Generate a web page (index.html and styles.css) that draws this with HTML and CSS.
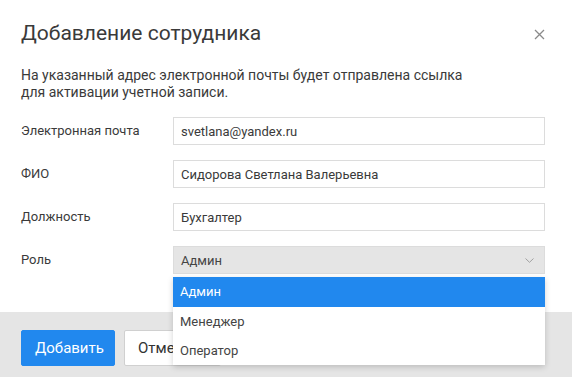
FILE: index.html
```html
<!DOCTYPE html>
<html lang="ru">
<head>
  <meta charset="UTF-8">
  <title>Добавление сотрудника</title>
  <link rel="stylesheet" href="styles.css">
</head>
<body>
  <div class="modal">
    <div class="modal-head">
      <h2>Добавление сотрудника</h2>
      <button class="close" aria-label="Закрыть">
        <svg width="11" height="11" viewBox="0 0 11 11"><path d="M1 1L10 10M10 1L1 10" stroke="#8a8a8a" stroke-width="1.3" fill="none"/></svg>
      </button>
    </div>

    <div class="modal-body">
      <p class="note">На указанный адрес электронной почты будет отправлена ссылка<br>для активации учетной записи.</p>

      <div class="form">
        <label>Электронная почта</label>
        <input type="text" value="svetlana@yandex.ru">

        <label>ФИО</label>
        <input type="text" value="Сидорова Светлана Валерьевна">

        <label>Должность</label>
        <input type="text" value="Бухгалтер">

        <label>Роль</label>
        <div class="select-wrap">
          <div class="select">
            <span>Админ</span>
            <svg width="9" height="5" viewBox="0 0 9 5"><path d="M0.5 0.5L4.5 4.3L8.5 0.5" stroke="#a0a0a0" stroke-width="1" fill="none"/></svg>
          </div>
          <ul class="options">
            <li class="active">Админ</li>
            <li>Менеджер</li>
            <li>Оператор</li>
          </ul>
        </div>
      </div>
    </div>

    <div class="modal-foot">
      <button class="btn btn-primary">Добавить</button>
      <button class="btn">Отменить</button>
    </div>
  </div>
</body>
</html>
```

FILE: styles.css
```css
body {
  margin: 0;
  background: #fff;
  font-family: Roboto, "Liberation Sans", Arial, sans-serif;
  color: #333;
}

.modal {
  width: 572px;
  height: 377px;
  display: flex;
  flex-direction: column;
  overflow: hidden;
}

.modal-head {
  display: flex;
  justify-content: space-between;
  align-items: center;
  padding: 19px 21px 0 21px;
  height: 28px;
}

.modal-head h2 {
  margin: 0;
  font-size: 21px;
  font-weight: 400;
  color: #3a3a3a;
}

.close {
  border: none;
  background: none;
  padding: 0;
  margin-top: 2px;
  margin-right: 6px;
  cursor: pointer;
  display: flex;
}

.modal-body {
  padding: 0 27px 0 21px;
  flex: 1;
}

.note {
  margin: 20px 0 16px 0;
  font-size: 14px;
  line-height: 17px;
  color: #3a3a3a;
}

.form {
  display: grid;
  grid-template-columns: 152px 1fr;
  row-gap: 15px;
  align-items: center;
}

.form label {
  font-size: 13px;
  color: #3a3a3a;
  margin-top: -2px;
}

.form input {
  height: 28px;
  box-sizing: border-box;
  border: 1px solid #dcdcdc;
  padding: 0 7px;
  font-family: inherit;
  font-size: 13px;
  color: #3a3a3a;
  outline: none;
}

.select-wrap {
  position: relative;
}

.select {
  height: 28px;
  box-sizing: border-box;
  border: 1px solid #dcdcdc;
  background: #e5e5e5;
  display: flex;
  align-items: center;
  justify-content: space-between;
  padding: 0 10px 0 7px;
  font-size: 13px;
  color: #444;
}

.options {
  position: absolute;
  top: 31px;
  left: 0;
  right: 0;
  margin: 0;
  padding: 0;
  list-style: none;
  background: #fff;
  box-shadow: 0 2px 6px rgba(0, 0, 0, 0.18);
  z-index: 2;
}

.options li {
  height: 29px;
  line-height: 29px;
  padding: 0 7px;
  font-size: 13px;
  color: #444;
}

.options li.active {
  height: 30px;
  line-height: 30px;
  background: #2188ee;
  color: #fff;
}

.modal-foot {
  background: #e5e5e5;
  height: 65px;
  padding: 18px 21px 0 21px;
  box-sizing: border-box;
  display: flex;
  gap: 9px;
  align-items: flex-start;
}

.btn {
  height: 36px;
  padding: 0 13px;
  border: 1px solid #d0d0d0;
  border-radius: 2px;
  background: #fff;
  font-family: inherit;
  font-size: 15px;
  color: #333;
  cursor: pointer;
}

.btn-primary {
  width: 94px;
  background: #2188ee;
  border-color: #2188ee;
  color: #fff;
}
```
